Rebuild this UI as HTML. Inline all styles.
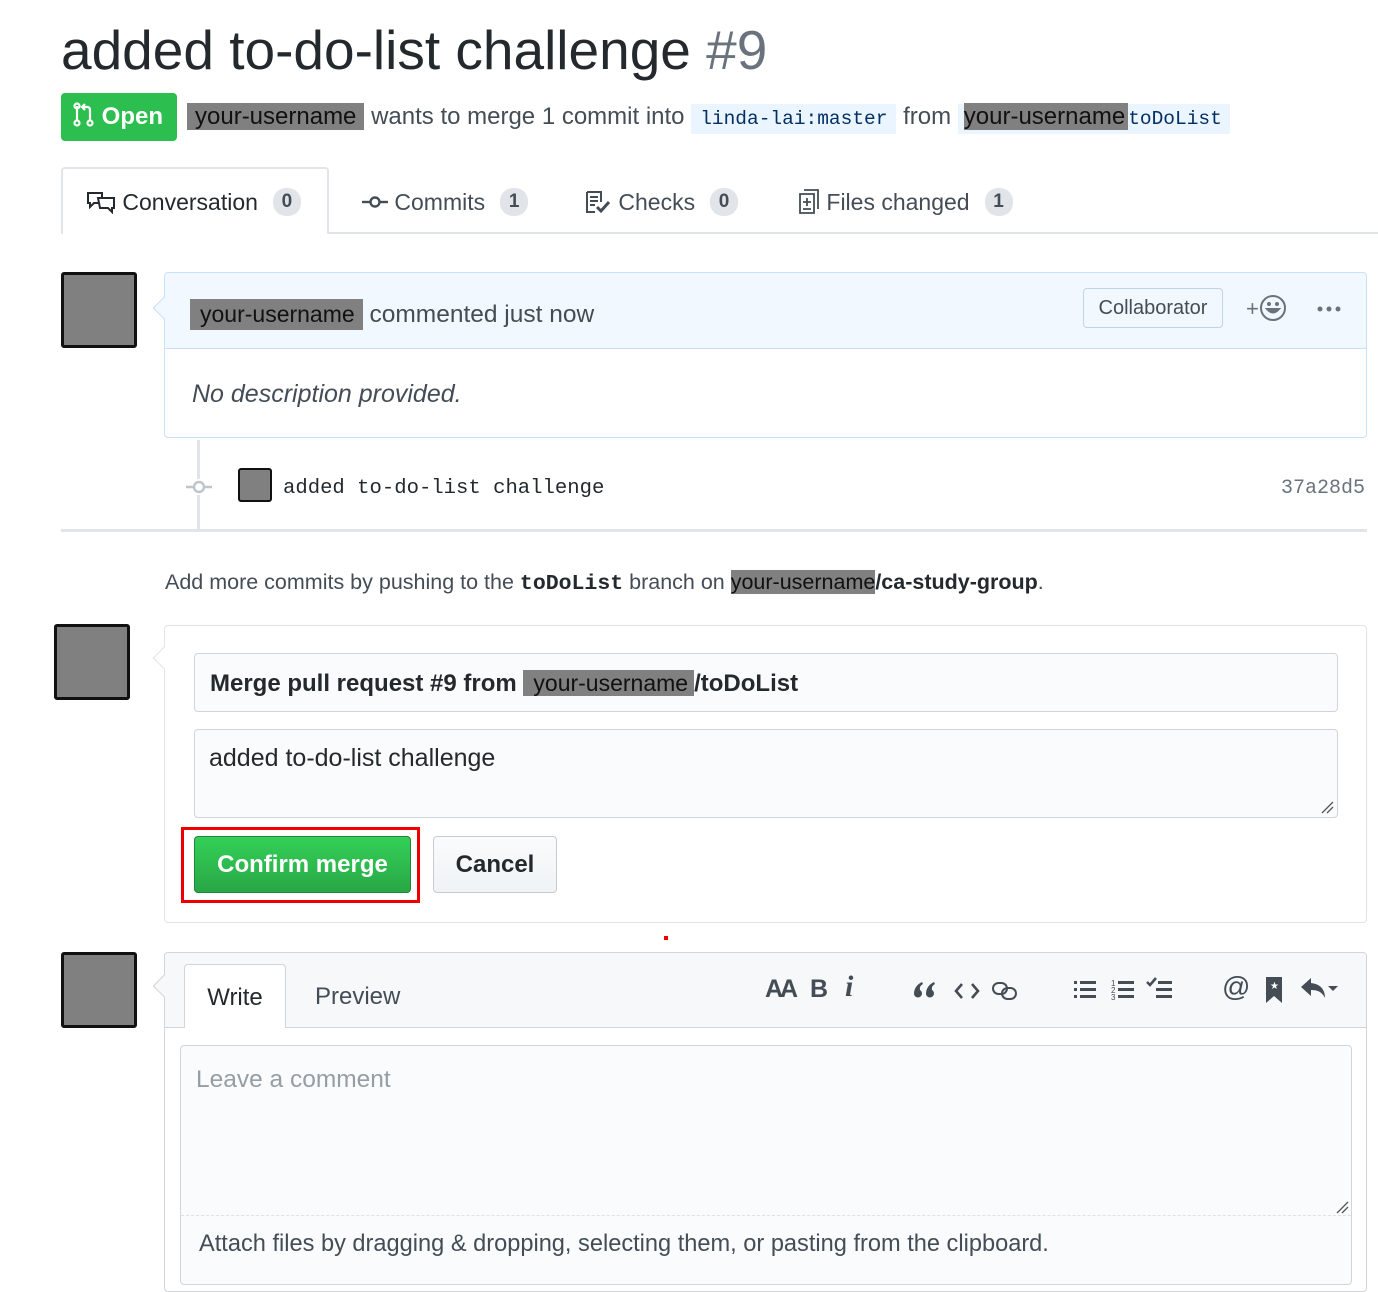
<!DOCTYPE html>
<html><head><meta charset="utf-8"><style>
*{box-sizing:border-box;margin:0;padding:0}
body{width:1378px;height:1270px;background:#fff;font-family:"Liberation Sans",sans-serif;color:#24292e;position:relative;overflow:hidden}
.a{position:absolute}
.mono{font-family:"Liberation Mono",monospace}
.u{background:#808080;color:#111;padding:0 8px}
.av{position:absolute;width:76px;height:76px;background:#808080;border:3px solid #111;border-radius:3px}
.cnt{display:inline-block;background:#e1e4e8;border-radius:13px;min-width:28px;height:28px;line-height:28px;text-align:center;font-size:19px;font-weight:bold;color:#444d56;margin-left:15px}
.tab{position:absolute;top:188px;font-size:23px;color:#444d56;display:flex;align-items:center}
.ico{color:#444d56;font-size:24px;font-weight:bold;position:absolute;top:975px}
</style></head><body>

<div class="a" style="left:61px;top:18px;font-size:55px;color:#24292e">added to-do-list challenge <span style="color:#6a737d">#9</span></div>

<div class="a" style="left:61px;top:93px;width:116px;height:48px;background:#2cbe4e;border-radius:4px;color:#fff;font-size:24px;font-weight:bold;line-height:48px;padding-left:12px">
<svg width="22" height="26" viewBox="0 0 22 26" style="vertical-align:-4px"><g fill="none" stroke="#fff" stroke-width="2.2"><circle cx="4" cy="21" r="2.5"/><line x1="4" y1="18" x2="4" y2="4"/><circle cx="4" cy="4" r="2.5"/><circle cx="17" cy="21" r="2.5"/><path d="M17 18V8q0-3-3-3H10"/><path d="M12 2l-3 3 3 3"/></g></svg> Open</div>

<div class="a" style="left:187px;top:103px;font-size:24px;line-height:28px;color:#444d56"><span class="u">your-username</span> wants to merge 1 commit into <span class="mono" style="background:#eaf5ff;color:#032f62;font-size:19.5px;padding:4px 9px">linda-lai:master</span> from <span class="mono" style="background:#eaf5ff;padding:4px 8px 4px 8px;font-size:19.5px;color:#032f62"><span style="background:#808080;color:#111;font-family:'Liberation Sans',sans-serif;font-size:24px;margin-left:-2px;padding:0 3px 0 0">your-username</span>toDoList</span></div>

<!-- tabs -->
<div class="a" style="left:61px;top:232px;width:1317px;height:2px;background:#e1e4e8"></div>
<div class="a" style="left:61px;top:167px;width:268px;height:67px;border:2px solid #e1e4e8;border-bottom:none;border-top-left-radius:4px;border-top-right-radius:4px;background:#fff"></div>
<div class="tab" style="left:86px;color:#24292e"><svg width="30" height="24" viewBox="0 0 30 24"><g fill="none" stroke="#24292e" stroke-width="2"><path d="M2 3h14v10H8l-4 4v-4H2z"/><path d="M12 8h16v10h-2v4l-4-4h-8z" fill="#fff"/></g></svg>&nbsp;Conversation <span class="cnt">0</span></div>
<div class="tab" style="left:362px"><svg width="26" height="14" viewBox="0 0 26 14"><g fill="none" stroke="#444d56" stroke-width="2.4"><circle cx="13" cy="7" r="4.5"/><line x1="0" y1="7" x2="8" y2="7"/><line x1="18" y1="7" x2="26" y2="7"/></g></svg>&nbsp;Commits <span class="cnt">1</span></div>
<div class="tab" style="left:584px"><svg width="28" height="24" viewBox="0 0 28 24"><g fill="none" stroke="#444d56" stroke-width="2"><path d="M3 2h14v10M3 2v20h8"/><path d="M6 7h8M6 11h8M6 15h5"/><path d="M13 17l4 4 8-9" stroke-width="3"/></g></svg>&nbsp;Checks <span class="cnt">0</span></div>
<div class="tab" style="left:798px"><svg width="22" height="26" viewBox="0 0 22 26"><g fill="none" stroke="#444d56" stroke-width="1.8"><path d="M2 5h14v19H2z"/><path d="M6 1h14v19"/><path d="M9 9v8M5 13h8M5 20h8"/></g></svg>&nbsp;Files changed <span class="cnt">1</span></div>

<!-- comment 1 -->
<div class="av" style="left:61px;top:272px"></div>
<div class="a" style="left:164px;top:272px;width:1203px;height:166px;border:1px solid #c8e1ff;border-radius:4px;overflow:hidden">
 <div style="height:76px;background:#f1f8ff;border-bottom:1px solid #c8e1ff"></div>
</div>
<div class="a" style="left:156px;top:300px;width:16px;height:16px;background:#f1f8ff;border-left:1px solid #c8e1ff;border-bottom:1px solid #c8e1ff;transform:rotate(45deg)"></div>
<div class="a" style="left:190px;top:297px;font-size:24.5px;color:#444d56;line-height:34px"><span class="u" style="padding:2px 8px 3px 10px;font-size:23px">your-username</span> commented just now</div>
<div class="a" style="left:1083px;top:288px;width:140px;height:40px;border:1px solid #bfd4e8;border-radius:4px;font-size:20px;color:#444d56;text-align:center;line-height:38px">Collaborator</div>
<div class="a" style="left:1246px;top:294px;font-size:22px;color:#6a737d">+<svg width="28" height="28" viewBox="0 0 28 28" style="vertical-align:-6px"><g fill="none" stroke="#6a737d" stroke-width="2"><circle cx="14" cy="14" r="12"/><path d="M8 15q6 7 12 0z" fill="#6a737d"/></g><circle cx="10" cy="10" r="2" fill="#6a737d"/><circle cx="18" cy="10" r="2" fill="#6a737d"/></svg></div>
<svg class="a" style="left:1316px;top:305px" width="26" height="8"><g fill="#6a737d"><circle cx="4" cy="4" r="2.5"/><circle cx="13" cy="4" r="2.5"/><circle cx="22" cy="4" r="2.5"/></g></svg>
<div class="a" style="left:192px;top:380px;font-size:25px;font-style:italic;color:#444d56">No description provided.</div>

<!-- commit line -->
<div class="a" style="left:197px;top:440px;width:3px;height:90px;background:#e1e4e8"></div>
<div class="a" style="left:187px;top:479px;width:24px;height:16px;background:#fff"></div>
<svg class="a" style="left:186px;top:479px" width="26" height="16"><g fill="none" stroke="#c0c5cc" stroke-width="2.5"><circle cx="13" cy="8" r="5"/><line x1="0" y1="8" x2="8" y2="8"/><line x1="18" y1="8" x2="26" y2="8"/></g></svg>
<div class="a" style="left:238px;top:468px;width:34px;height:34px;background:#808080;border:2px solid #111;border-radius:3px"></div>
<div class="a mono" style="left:283px;top:477px;font-size:20.6px;color:#24292e">added to-do-list challenge</div>
<div class="a mono" style="left:1281px;top:477px;font-size:20px;color:#6a737d">37a28d5</div>
<div class="a" style="left:61px;top:529px;width:1306px;height:3px;background:#e1e4e8"></div>

<div class="a" style="left:165px;top:569px;font-size:21.5px;color:#444d56;line-height:26px">Add more commits by pushing to the <b class="mono" style="color:#24292e">toDoList</b> branch on <span style="background:#808080;color:#111">your-username</span><b style="color:#24292e">/ca-study-group</b>.</div>

<!-- merge box -->
<div class="av" style="left:54px;top:624px"></div>
<div class="a" style="left:164px;top:625px;width:1203px;height:298px;border:1px solid #e1e4e8;border-radius:4px"></div>
<div class="a" style="left:156px;top:650px;width:16px;height:16px;background:#fff;border-left:1px solid #e1e4e8;border-bottom:1px solid #e1e4e8;transform:rotate(45deg)"></div>
<div class="a" style="left:194px;top:653px;width:1144px;height:59px;background:#fafbfc;border:1px solid #d1d5da;border-radius:4px"></div>
<div class="a" style="left:210px;top:668px;font-size:24px;font-weight:bold;color:#24292e;line-height:30px">Merge pull request #9 from <span style="background:#808080;font-weight:normal;color:#111;padding:0 6px 0 10px;font-size:23px">your-username</span>/toDoList</div>
<div class="a" style="left:194px;top:729px;width:1144px;height:89px;background:#fafbfc;border:1px solid #d1d5da;border-radius:4px"></div>
<div class="a" style="left:209px;top:744px;font-size:25px;color:#24292e">added to-do-list challenge</div>
<svg class="a" style="left:1320px;top:800px" width="14" height="14"><path d="M2 13L13 2M7 13L13 7" stroke="#555" stroke-width="1.3"/></svg>
<div class="a" style="left:181px;top:827px;width:239px;height:76px;border:3px solid #ee0000"></div>
<div class="a" style="left:194px;top:836px;width:217px;height:57px;background:linear-gradient(#34d058,#28a745);border:1px solid #22863a;border-radius:4px;color:#fff;font-size:24px;font-weight:bold;text-align:center;line-height:55px">Confirm merge</div>
<div class="a" style="left:433px;top:836px;width:124px;height:57px;background:linear-gradient(#fafbfc,#eff3f6);border:1px solid #c8ccd1;border-radius:4px;color:#24292e;font-size:24px;font-weight:bold;text-align:center;line-height:55px">Cancel</div>
<div class="a" style="left:664px;top:936px;width:4px;height:4px;background:#e00"></div>

<!-- comment form -->
<div class="av" style="left:61px;top:952px"></div>
<div class="a" style="left:164px;top:952px;width:1203px;height:340px;border:1px solid #d1d5da;border-radius:4px;overflow:hidden">
 <div style="height:75px;background:#f6f8fa;border-bottom:1px solid #d1d5da"></div>
</div>
<div class="a" style="left:156px;top:978px;width:16px;height:16px;background:#f6f8fa;border-left:1px solid #d1d5da;border-bottom:1px solid #d1d5da;transform:rotate(45deg)"></div>
<div class="a" style="left:184px;top:964px;width:102px;height:64px;background:#fff;border:1px solid #d1d5da;border-bottom:none;border-radius:4px 4px 0 0;font-size:24px;text-align:center;line-height:66px;color:#24292e">Write</div>
<div class="a" style="left:315px;top:983px;font-size:24px;color:#444d56">Preview</div>
<div class="ico" style="left:765px;letter-spacing:-3px;font-size:25px">AA</div>
<div class="ico" style="left:810px;font-size:25px">B</div>
<div class="ico" style="left:845px;font-style:italic;font-family:'Liberation Serif',serif;font-size:30px;top:970px">i</div>
<svg class="a" style="left:912px;top:980px" width="26" height="22"><g fill="#444d56"><path d="M10 2Q2 6 2 14a4 4 0 1 0 6-4Q7 6 11 4z"/><path d="M22 2Q14 6 14 14a4 4 0 1 0 6-4Q19 6 23 4z"/></g></svg>
<svg class="a" style="left:954px;top:981px" width="26" height="20"><g fill="none" stroke="#444d56" stroke-width="2.6"><path d="M8 3L2 10l6 7M18 3l6 7-6 7"/></g></svg>
<svg class="a" style="left:991px;top:980px" width="28" height="22"><g fill="none" stroke="#444d56" stroke-width="2"><rect x="2" y="3" width="14" height="11" rx="5.5"/><rect x="11" y="8" width="14" height="11" rx="5.5"/></g></svg>
<svg class="a" style="left:1073px;top:978px" width="24" height="24"><g fill="#444d56"><rect x="1" y="3" width="3" height="3"/><rect x="1" y="10" width="3" height="3"/><rect x="1" y="17" width="3" height="3"/><rect x="7" y="3" width="16" height="3"/><rect x="7" y="10" width="16" height="3"/><rect x="7" y="17" width="16" height="3"/></g></svg>
<svg class="a" style="left:1111px;top:978px" width="24" height="24"><g fill="#444d56"><text x="0" y="8" font-size="8" font-family="Liberation Sans">1</text><text x="0" y="15" font-size="8" font-family="Liberation Sans">2</text><text x="0" y="22" font-size="8" font-family="Liberation Sans">3</text><rect x="7" y="3" width="16" height="3"/><rect x="7" y="10" width="16" height="3"/><rect x="7" y="17" width="16" height="3"/></g></svg>
<svg class="a" style="left:1146px;top:976px" width="28" height="26"><g fill="#444d56"><path d="M1 6l3 3 6-7" fill="none" stroke="#444d56" stroke-width="2.5"/><rect x="12" y="5" width="14" height="3"/><rect x="10" y="12" width="16" height="3"/><rect x="10" y="19" width="16" height="3"/></g></svg>
<div class="ico" style="left:1222px;font-weight:normal;font-size:28px;top:971px">@</div>
<svg class="a" style="left:1264px;top:976px" width="20" height="28"><path d="M2 1h16v26l-8-7-8 7z" fill="#444d56"/><text x="6" y="13" font-size="10" fill="#fff">★</text></svg>
<svg class="a" style="left:1299px;top:976px" width="42" height="26"><path d="M12 2L2 11l10 9v-6c7 0 11 2 14 8 0-9-5-14-14-15z" fill="#444d56"/><path d="M29 10h10l-5 5z" fill="#444d56"/></svg>

<div class="a" style="left:180px;top:1045px;width:1172px;height:240px;background:#fafbfc;border:1px solid #d1d5da;border-radius:4px"></div>
<div class="a" style="left:181px;top:1215px;width:1170px;height:0;border-top:1px dashed #dfe2e5"></div>
<div class="a" style="left:196px;top:1066px;font-size:24.5px;color:#959da5">Leave a comment</div>
<svg class="a" style="left:1335px;top:1200px" width="14" height="14"><path d="M2 13L13 2M7 13L13 7" stroke="#555" stroke-width="1.3"/></svg>
<div class="a" style="left:199px;top:1231px;font-size:23.6px;color:#444d56">Attach files by dragging &amp; dropping, selecting them, or pasting from the clipboard.</div>
</body></html>
